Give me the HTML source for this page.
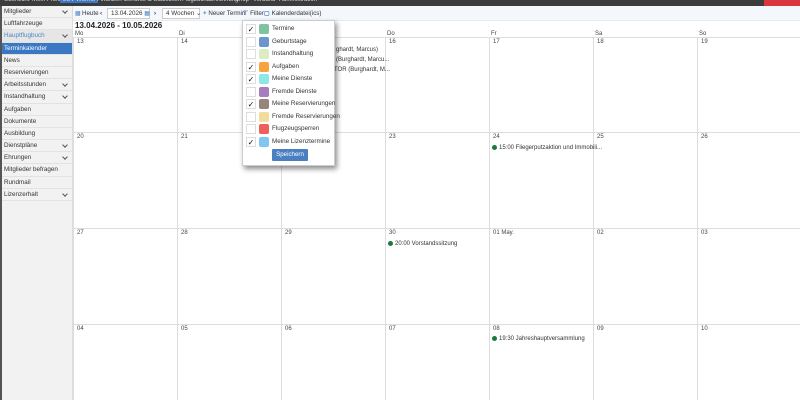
<!DOCTYPE html>
<html><head><meta charset="utf-8"><style>
*{box-sizing:border-box;margin:0;padding:0}
body{width:800px;height:400px;overflow:hidden;background:#fff;font-family:"Liberation Sans",sans-serif;font-size:6px;color:#333;position:relative}
.top{position:absolute;left:0;top:0;width:800px;height:6px;background:#3c3c3c;overflow:hidden}
.top span{position:absolute;top:-3px;color:#ddd;font-size:6px;white-space:nowrap}
.logout{position:absolute;right:0;top:0;width:36px;height:6px;background:#d9363e}
.side{position:absolute;left:0;top:6px;width:73px;height:394px;background:#f2f2f2;border-left:2px solid #555;border-right:1px solid #ddd}
.side div{height:12.2px;line-height:12px;padding-left:2px;border-bottom:1px solid #e2e2e2;font-size:6.3px;position:relative;color:#333;white-space:nowrap}
.side div.c:after{content:"";position:absolute;right:5px;top:3px;width:3px;height:3px;border-right:1px solid #555;border-bottom:1px solid #555;transform:rotate(45deg)}
.side .hb{color:#4a86c8;background:#e6e6e6}
.side .act{background:#3a78c3;color:#fff}
.tb{position:absolute;left:73px;top:6px;width:727px;height:15px;background:#f4f7fb;border-bottom:1px solid #e8ecf0}
.tb span{position:absolute;top:4px;font-size:6.2px;color:#333;white-space:nowrap}
.box{position:absolute;top:2px;height:11px;border:1px solid #ccc;background:#fff;font-size:6.3px;line-height:9px;padding-left:3px;white-space:nowrap}
.title{position:absolute;left:75px;top:21px;font-weight:bold;font-size:8px;color:#222}
.dn{position:absolute;top:30.5px;font-size:6px;color:#444}
.hl{position:absolute;left:73px;width:727px;height:1px;background:#ddd}
.vl{position:absolute;top:37px;width:1px;height:363px;background:#ddd}
.num{position:absolute;font-size:6px;color:#444}
.ev{position:absolute;font-size:6px;color:#333;white-space:nowrap}
.ev i{display:inline-block;width:5px;height:5px;border-radius:50%;background:#1a7a3a;margin-right:2px;vertical-align:-1px}
.pop{position:absolute;left:242px;top:20px;width:93px;height:146px;background:#fff;border:1px solid #ccc;box-shadow:2px 3px 5px rgba(0,0,0,.45)}
.pop .r{position:absolute;left:3px;height:12px;width:88px}
.pop .cb{position:absolute;left:0;top:1px;width:10px;height:10px;border:1px solid #ddd;background:#fff;font-size:8px;line-height:9px;text-align:center;color:#111}
.pop .sw{position:absolute;left:13px;top:1px;width:10px;height:10px;border-radius:2px}
.pop .t{position:absolute;left:26px;top:2px;font-size:6.3px;color:#333;white-space:nowrap}
.btn{position:absolute;left:29px;top:128px;width:36px;height:12px;background:#4a7fc1;color:#fff;font-size:6.2px;line-height:12px;text-align:center;border-radius:1px}
</style></head><body>
<div class="top">
<span style="left:4px">Übersicht</span><span style="left:32px">Mein Profil</span>
<span style="left:60px;background:#3a78c3;padding:0 3px">LSV Worms</span>
<span style="left:97px">Finanzen</span><span style="left:124px">Berichte &amp; Statistiken</span>
<span style="left:182px">Flugbuchabrechnung</span><span style="left:235px">Shop</span><span style="left:253px">Verband</span><span style="left:279px">Administration</span>
<div class="logout"></div></div>
<div class="side">
<div class="c">Mitglieder</div><div>Luftfahrzeuge</div><div class="c hb">Hauptflugbuch</div><div class="act">Terminkalender</div><div>News</div><div>Reservierungen</div><div class="c">Arbeitsstunden</div><div class="c">Instandhaltung</div><div>Aufgaben</div><div>Dokumente</div><div>Ausbildung</div><div class="c">Dienstpläne</div><div class="c">Ehrungen</div><div>Mitglieder befragen</div><div>Rundmail</div><div class="c">Lizenzerhalt</div>
</div>
<div class="tb">
<span style="left:2px;color:#4a7fc1">▦</span><span style="left:9px">Heute</span>
<span style="left:27px;font-weight:bold">‹</span>
<div class="box" style="left:34px;width:43px">13.04.2026 <span style="color:#4a7fc1;position:static">▦</span></div>
<span style="left:81px;font-weight:bold">›</span>
<div class="box" style="left:89px;width:38px">4 Wochen ⌄</div>
<span style="left:130px"><b style="color:#4a7fc1">+</b> Neuer Termin</span>
<span style="left:170px"><b style="color:#4a7fc1">⊤</b> Filter</span>
<span style="left:191px"><b style="color:#4a7fc1">▢</b> Kalenderdatei(ics)</span>
</div>
<div class="title">13.04.2026 - 10.05.2026</div>
<div class="dn" style="left:75px">Mo</div><div class="dn" style="left:179px">Di</div><div class="dn" style="left:283px">Mi</div><div class="dn" style="left:387px">Do</div><div class="dn" style="left:491px">Fr</div><div class="dn" style="left:595px">Sa</div><div class="dn" style="left:699px">So</div>
<div class="hl" style="top:37px"></div><div class="hl" style="top:132px"></div><div class="hl" style="top:228px"></div><div class="hl" style="top:324px"></div>
<div class="vl" style="left:73px"></div><div class="vl" style="left:177px"></div><div class="vl" style="left:281px"></div><div class="vl" style="left:385px"></div><div class="vl" style="left:489px"></div><div class="vl" style="left:593px"></div><div class="vl" style="left:697px"></div>
<div class="num" style="left:77px;top:39px">13</div><div class="num" style="left:181px;top:39px">14</div><div class="num" style="left:285px;top:39px">15</div><div class="num" style="left:389px;top:39px">16</div><div class="num" style="left:493px;top:39px">17</div><div class="num" style="left:597px;top:39px">18</div><div class="num" style="left:701px;top:39px">19</div>
<div class="num" style="left:77px;top:134px">20</div><div class="num" style="left:181px;top:134px">21</div><div class="num" style="left:285px;top:134px">22</div><div class="num" style="left:389px;top:134px">23</div><div class="num" style="left:493px;top:134px">24</div><div class="num" style="left:597px;top:134px">25</div><div class="num" style="left:701px;top:134px">26</div>
<div class="num" style="left:77px;top:230px">27</div><div class="num" style="left:181px;top:230px">28</div><div class="num" style="left:285px;top:230px">29</div><div class="num" style="left:389px;top:230px">30</div><div class="num" style="left:493px;top:230px">01 May.</div><div class="num" style="left:597px;top:230px">02</div><div class="num" style="left:701px;top:230px">03</div>
<div class="num" style="left:77px;top:326px">04</div><div class="num" style="left:181px;top:326px">05</div><div class="num" style="left:285px;top:326px">06</div><div class="num" style="left:389px;top:326px">07</div><div class="num" style="left:493px;top:326px">08</div><div class="num" style="left:597px;top:326px">09</div><div class="num" style="left:701px;top:326px">10</div>
<div class="ev" style="left:336px;top:47px">ghardt, Marcus)</div>
<div class="ev" style="left:336px;top:57px">(Burghardt, Marcu...</div>
<div class="ev" style="left:334px;top:67px">TOR (Burghardt, M...</div>
<div class="ev" style="left:492px;top:145px"><i></i>15:00 Fliegerputzaktion und Immobili...</div>
<div class="ev" style="left:388px;top:241px"><i></i>20:00 Vorstandssitzung</div>
<div class="ev" style="left:492px;top:336px"><i></i>19:30 Jahreshauptversammlung</div>
<div class="pop">
<div class="r" style="top:2px"><div class="cb">✓</div><div class="sw" style="background:#7fc4a0"></div><div class="t">Termine</div></div>
<div class="r" style="top:14.5px"><div class="cb"></div><div class="sw" style="background:#6b96cf"></div><div class="t">Geburtstage</div></div>
<div class="r" style="top:27px"><div class="cb"></div><div class="sw" style="background:#dcedc4"></div><div class="t">Instandhaltung</div></div>
<div class="r" style="top:39.5px"><div class="cb">✓</div><div class="sw" style="background:#f7a440"></div><div class="t">Aufgaben</div></div>
<div class="r" style="top:52px"><div class="cb">✓</div><div class="sw" style="background:#8ee8ea"></div><div class="t">Meine Dienste</div></div>
<div class="r" style="top:64.5px"><div class="cb"></div><div class="sw" style="background:#a77dbd"></div><div class="t">Fremde Dienste</div></div>
<div class="r" style="top:77px"><div class="cb">✓</div><div class="sw" style="background:#98857a"></div><div class="t">Meine Reservierungen</div></div>
<div class="r" style="top:89.5px"><div class="cb"></div><div class="sw" style="background:#f0dc9c"></div><div class="t">Fremde Reservierungen</div></div>
<div class="r" style="top:102px"><div class="cb"></div><div class="sw" style="background:#f0605a"></div><div class="t">Flugzeugsperren</div></div>
<div class="r" style="top:114.5px"><div class="cb">✓</div><div class="sw" style="background:#7ec8f0"></div><div class="t">Meine Lizenztermine</div></div>
<div class="btn">Speichern</div>
</div>
</body></html>
